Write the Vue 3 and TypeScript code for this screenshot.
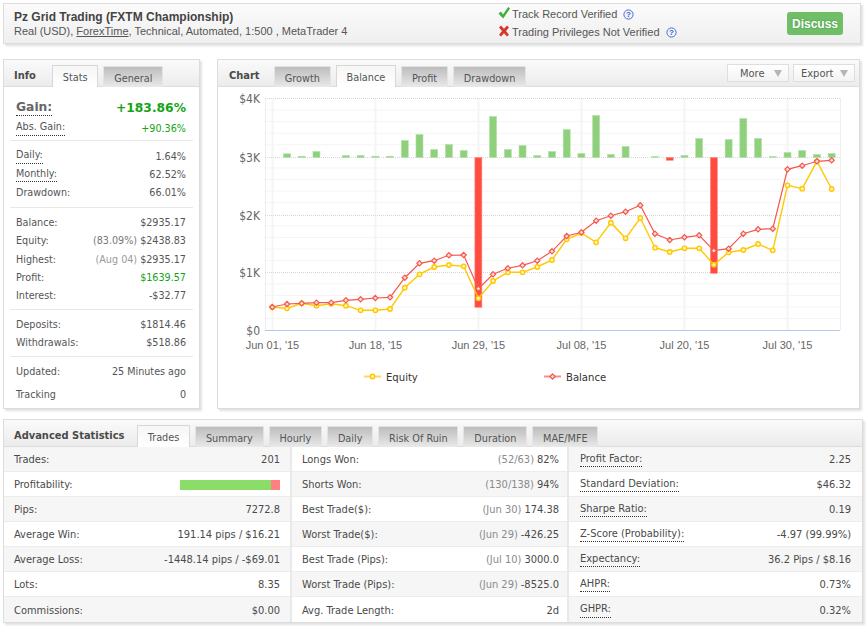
<script setup lang="ts">
import { computed } from 'vue';

interface Row {
  label: string;
  note?: string;
  value?: string;
  dotted?: boolean;
  green?: boolean;
  bar?: boolean;
}

const infoGroups: { cls: string; rows: Row[] }[] = [
  {
    cls: 'g2',
    rows: [
      { label: 'Daily:', value: '1.64%', dotted: true },
      { label: 'Monthly:', value: '62.52%', dotted: true },
      { label: 'Drawdown:', value: '66.01%' },
    ],
  },
  {
    cls: 'g3',
    rows: [
      { label: 'Balance:', value: '$2935.17' },
      { label: 'Equity:', note: '(83.09%)', value: '$2438.83' },
      { label: 'Highest:', note: '(Aug 04)', value: '$2935.17' },
      { label: 'Profit:', value: '$1639.57', green: true },
      { label: 'Interest:', value: '-$32.77' },
    ],
  },
  {
    cls: 'g4',
    rows: [
      { label: 'Deposits:', value: '$1814.46' },
      { label: 'Withdrawals:', value: '$518.86' },
    ],
  },
];

const chartTabs = ['Growth', 'Balance', 'Profit', 'Drawdown'];
const statTabs = ['Trades', 'Summary', 'Hourly', 'Daily', 'Risk Of Ruin', 'Duration', 'MAE/MFE'];

const statCols: { cls: string; rows: Row[] }[] = [
  {
    cls: 'col1',
    rows: [
      { label: 'Trades:', value: '201' },
      { label: 'Profitability:', bar: true },
      { label: 'Pips:', value: '7272.8' },
      { label: 'Average Win:', value: '191.14 pips / $16.21' },
      { label: 'Average Loss:', value: '-1448.14 pips / -$69.01' },
      { label: 'Lots:', value: '8.35' },
      { label: 'Commissions:', value: '$0.00' },
    ],
  },
  {
    cls: 'col2',
    rows: [
      { label: 'Longs Won:', note: '(52/63)', value: '82%' },
      { label: 'Shorts Won:', note: '(130/138)', value: '94%' },
      { label: 'Best Trade($):', note: '(Jun 30)', value: '174.38' },
      { label: 'Worst Trade($):', note: '(Jun 29)', value: '-426.25' },
      { label: 'Best Trade (Pips):', note: '(Jul 10)', value: '3000.0' },
      { label: 'Worst Trade (Pips):', note: '(Jun 29)', value: '-8525.0' },
      { label: 'Avg. Trade Length:', value: '2d' },
    ],
  },
  {
    cls: 'col3',
    rows: [
      { label: 'Profit Factor:', value: '2.25', dotted: true },
      { label: 'Standard Deviation:', value: '$46.32', dotted: true },
      { label: 'Sharpe Ratio:', value: '0.19', dotted: true },
      { label: 'Z-Score (Probability):', value: '-4.97 (99.99%)', dotted: true },
      { label: 'Expectancy:', value: '36.2 Pips / $8.16', dotted: true },
      { label: 'AHPR:', value: '0.73%', dotted: true },
      { label: 'GHPR:', value: '0.32%', dotted: true },
    ],
  },
];

// chart geometry, in page pixels (the svg viewBox starts at the panel body)
const X0 = 272.3;
const STEP = 14.72;
const BASE = 157.5;
const xAt = (i: number) => X0 + i * STEP;

const balanceY = [
  307, 304, 303.3, 302.7, 302.7, 300.3, 299.3, 298, 297.3, 277.7, 263.3, 260.7, 255.3, 255, 288.7, 274.3, 268.3,
  265.3, 260.7, 251.3, 236, 232.3, 220.7, 215.7, 211.7, 205.3, 233.7, 240, 237.3, 235.3, 250.7, 248.7, 233.7, 229.3,
  228.7, 169.3, 165.7, 161.3, 160.3,
];
const equityY = [
  307.3, 308.3, 303.3, 305.7, 303.7, 305.7, 310.3, 310.3, 309, 287.7, 274.3, 267, 265, 266.3, 298.3, 281, 272.3,
  272.3, 267, 260, 239.3, 233, 242.3, 222.7, 238.3, 218, 247.7, 252, 248.3, 248.3, 264.7, 252.3, 250, 244, 250.3,
  185.3, 188.7, 161.3, 189,
];
// positive grows up from the $3K line, negative hangs down from it
const barH = [
  0, 3.7, 1.3, 6, 0, 2, 2, 1.3, 1.3, 17, 23, 8, 13, 7, -149.8, 41, 8, 12, 2, 6, 28, 4, 42, 3, 11, 0, 1, -2.8, 2, 19,
  -115.8, 18, 39, 19, 1, 5, 7, 3, 4,
];

const bars = computed(() =>
  barH
    .map((h, i) => ({ h, i }))
    .filter((b) => b.h !== 0)
    .map((b) => ({
      x: xAt(b.i) - 3.5,
      y: b.h > 0 ? BASE - b.h : BASE,
      h: Math.abs(b.h),
      up: b.h > 0,
    })),
);

const toPoints = (ys: number[]) => ys.map((y, i) => `${xAt(i).toFixed(1)},${y}`).join(' ');
const balancePoints = toPoints(balanceY);
const equityPoints = toPoints(equityY);
const diamond = (x: number, y: number) => `${x},${y - 2.6} ${x + 2.6},${y} ${x},${y + 2.6} ${x - 2.6},${y}`;

const yLabels = [
  { t: '$4K', y: 98.5 },
  { t: '$3K', y: 157.5 },
  { t: '$2K', y: 215 },
  { t: '$1K', y: 272 },
  { t: '$0', y: 330 },
];
const majorY = [98.5, 157.5, 215.5, 272.5];
const minorY = computed(() => {
  const out: number[] = [];
  for (let k = 0; k < 4; k++) for (let j = 1; j < 5; j++) out.push(98.5 + k * 57.9 + j * 11.58);
  return out;
});
const xTicks = [
  { x: 272.5, t: "Jun 01, '15" },
  { x: 375.5, t: "Jun 18, '15" },
  { x: 478.5, t: "Jun 29, '15" },
  { x: 581.5, t: "Jul 08, '15" },
  { x: 684.5, t: "Jul 20, '15" },
  { x: 787.5, t: "Jul 30, '15" },
];
</script>

<template>
  <div class="page">
    <header class="panel top">
      <div class="top-title">
        <h1>Pz Grid Trading (FXTM Championship)</h1>
        <p>Real (USD), <u>ForexTime</u>, Technical, Automated, 1:500 , MetaTrader 4</p>
      </div>
      <div class="verify">
        <div class="verify-row">
          <svg class="mark" width="14" height="14" viewBox="0 0 14 14">
            <path d="M1.5 7.5 L4 5.6 L6 8.4 L11.2 1 L13 2.4 L6.2 12.6 Z" fill="#3fae3a" />
          </svg>
          <span>Track Record Verified</span>
          <svg class="help" width="11" height="11" viewBox="0 0 11 11">
            <circle cx="5.5" cy="5.5" r="4.6" fill="#eef3ff" stroke="#4a6fc9" />
            <text x="5.5" y="8.2" text-anchor="middle">?</text>
          </svg>
        </div>
        <div class="verify-row">
          <svg class="mark" width="14" height="14" viewBox="0 0 14 14">
            <path
              d="M2 3.4 L4 1.6 L7 4.8 L10 1.6 L12 3.4 L9 7 L12 10.8 L10 12.6 L7 9.2 L4 12.6 L2 10.8 L5 7 Z"
              fill="#d23a2e"
            />
          </svg>
          <span>Trading Privileges Not Verified</span>
          <svg class="help" width="11" height="11" viewBox="0 0 11 11">
            <circle cx="5.5" cy="5.5" r="4.6" fill="#eef3ff" stroke="#4a6fc9" />
            <text x="5.5" y="8.2" text-anchor="middle">?</text>
          </svg>
        </div>
      </div>
      <button class="discuss">Discuss</button>
    </header>

    <div class="middle">
      <section class="panel info">
        <div class="tabbar">
          <h2 class="bar-title info-title">Info</h2>
          <span class="tab active">Stats</span>
          <span class="tab">General</span>
        </div>
        <div class="group g1">
          <div class="row gain">
            <span class="lbl dotted">Gain:</span>
            <span class="green">+183.86%</span>
          </div>
          <div class="row abs">
            <span class="lbl dotted">Abs. Gain:</span>
            <span class="green">+90.36%</span>
          </div>
        </div>
        <div v-for="g in infoGroups" :key="g.cls" class="group" :class="g.cls">
          <div v-for="r in g.rows" :key="r.label" class="row">
            <span class="lbl" :class="{ dotted: r.dotted }">{{ r.label }}</span>
            <span :class="{ green: r.green }"
              ><span v-if="r.note" class="note" :class="{ pale: r.note.startsWith('(Aug') }">{{ r.note }}</span
              >{{ r.value }}</span
            >
          </div>
        </div>
        <div class="group g5">
          <div class="row"><span class="lbl">Updated:</span><span>25 Minutes ago</span></div>
          <div class="row tracking"><span class="lbl">Tracking</span><span>0</span></div>
        </div>
      </section>

      <section class="panel chart">
        <div class="tabbar">
          <h2 class="bar-title chart-title">Chart</h2>
          <span v-for="t in chartTabs" :key="t" class="tab" :class="{ active: t === 'Balance' }">{{ t }}</span>
          <div class="tools">
            <button class="tool more">More<i></i></button>
            <button class="tool export">Export<i></i></button>
          </div>
        </div>
        <svg class="plot" width="641" height="321" viewBox="218 87 641 321">
          <line v-for="y in minorY" :key="y" x1="265" x2="840" :y1="y" :y2="y" stroke="#f4f4f4" />
          <line
            v-for="t in xTicks"
            :key="t.x"
            :x1="t.x"
            :x2="t.x"
            y1="98.5"
            y2="330"
            stroke="#f4f4f4"
            stroke-width="2"
          />
          <line
            v-for="y in majorY"
            :key="y"
            x1="265"
            x2="840"
            :y1="y"
            :y2="y"
            stroke="#d6d6d6"
            stroke-dasharray="1 1"
          />
          <line x1="265.5" x2="265.5" y1="98.5" y2="330" stroke="#ddd" stroke-dasharray="1 1" />
          <line x1="840.5" x2="840.5" y1="98.5" y2="330" stroke="#ddd" stroke-dasharray="1 1" />
          <line x1="265" x2="840" y1="330.5" y2="330.5" stroke="#b5c9e4" />

          <rect
            v-for="b in bars"
            :key="b.x"
            :x="b.x"
            :y="b.y"
            width="7"
            :height="b.h"
            :fill="b.up ? '#8ed07c' : '#ff4c40'"
            :stroke="b.up ? '#b5e0a8' : '#ff8a80'"
            stroke-width="0.6"
          />

          <polyline :points="equityPoints" fill="none" stroke="#ffc800" stroke-width="1.4" />
          <circle
            v-for="(y, i) in equityY"
            :key="'e' + i"
            :cx="xAt(i)"
            :cy="y"
            r="2.2"
            fill="#fff4c0"
            stroke="#ffc800"
            stroke-width="1.4"
          />
          <polyline :points="balancePoints" fill="none" stroke="#f4574c" stroke-width="1.2" />
          <polygon
            v-for="(y, i) in balanceY"
            :key="'b' + i"
            :points="diamond(xAt(i), y)"
            fill="#ffd9d5"
            stroke="#f4574c"
            stroke-width="1.2"
          />

          <text v-for="l in yLabels" :key="l.t" class="ylab" x="260" :y="l.y + 4.5" text-anchor="end">{{ l.t }}</text>
          <text v-for="t in xTicks" :key="t.t" class="xlab" :x="t.x" y="349" text-anchor="middle">{{ t.t }}</text>

          <line x1="364" x2="381" y1="376.5" y2="376.5" stroke="#ffd95a" stroke-width="2" />
          <circle cx="372.5" cy="376.5" r="2.2" fill="#fff4c0" stroke="#ffc800" stroke-width="1.4" />
          <text class="legend" x="386" y="380.5">Equity</text>
          <line x1="544" x2="561" y1="376.5" y2="376.5" stroke="#fb8f87" stroke-width="2" />
          <polygon :points="diamond(552.5, 376.5)" fill="#ffd9d5" stroke="#f4574c" stroke-width="1.2" />
          <text class="legend" x="566" y="380.5">Balance</text>
        </svg>
      </section>
    </div>

    <section class="panel stats">
      <div class="tabbar">
        <h2 class="bar-title stats-title">Advanced Statistics</h2>
        <span v-for="t in statTabs" :key="t" class="tab" :class="{ active: t === 'Trades' }">{{ t }}</span>
      </div>
      <div class="stat-grid">
        <div v-for="c in statCols" :key="c.cls" class="stat-col" :class="c.cls">
          <div v-for="r in c.rows" :key="r.label" class="stat-row">
            <span class="lbl" :class="{ dotted: r.dotted }">{{ r.label }}</span>
            <span v-if="r.bar" class="profit-bar"><b></b><i></i></span>
            <span v-else
              ><span v-if="r.note" class="note">{{ r.note }}</span
              >{{ r.value }}</span
            >
          </div>
        </div>
      </div>
    </section>
  </div>
</template>

<style scoped>
.page {
  width: 867px;
  height: 627px;
  padding: 3px 0 0 3px;
  box-sizing: border-box;
  overflow: hidden;
  font-family: 'DejaVu Sans Condensed', 'DejaVu Sans', sans-serif;
  font-size: 11px;
  color: #4a4a4a;
}

.panel {
  box-sizing: border-box;
  background: #fff;
  border: 1px solid #dcdcdc;
  box-shadow: 2px 2px 2px #e2e2e2;
}

.top {
  width: 858px;
  height: 41px;
  display: flex;
  background: linear-gradient(#fbfbfb, #efefef);
  font-family: 'Liberation Sans', Arial, sans-serif;
}

.top-title {
  width: 496px;
  padding: 6px 0 0 10px;
  box-sizing: border-box;
}

.top-title h1 {
  margin: 0;
  font-size: 12px;
  line-height: 14px;
  font-weight: bold;
  color: #444;
}

.top-title p {
  margin: 0;
  font-size: 11px;
  line-height: 14px;
  color: #555;
}

.verify {
  width: 287px;
  padding-top: 1px;
  font-size: 11px;
  color: #555;
}

.verify-row {
  display: flex;
  align-items: center;
  height: 18px;
}

.mark {
  margin: -3px 1px 0 -3px;
}

.help {
  margin-left: 6px;
}

.help text {
  font-size: 8px;
  font-weight: bold;
  fill: #3c62c0;
  font-family: 'Liberation Sans', sans-serif;
}

.discuss {
  width: 56px;
  height: 23px;
  margin-top: 8px;
  padding: 0;
  border: 0;
  border-radius: 3px;
  background: #6fbf69;
  color: #fff;
  font-family: 'Liberation Sans', Arial, sans-serif;
  font-size: 12px;
  font-weight: bold;
  text-shadow: 0 0 2px rgba(60, 120, 60, 0.7);
}

.middle {
  display: flex;
  gap: 17px;
  margin-top: 15px;
  height: 350px;
}

.tabbar {
  display: flex;
  align-items: flex-end;
  gap: 5px;
  height: 27px;
  box-sizing: border-box;
  border-bottom: 1px solid #dcdcdc;
  background: linear-gradient(#fafafa, #ececec);
}

.bar-title {
  margin: 4px 0 0;
  align-self: center;
  font-size: 11px;
  font-weight: bold;
  color: #4a4a4a;
}

.info-title {
  width: 33px;
  padding-left: 10px;
}

.chart-title {
  width: 40px;
  padding-left: 11px;
}

.stats-title {
  width: 118px;
  padding-left: 10px;
  white-space: nowrap;
}

.tab {
  height: 21px;
  line-height: 23px;
  margin-bottom: -1px;
  padding: 0 9.8px;
  box-sizing: border-box;
  background: linear-gradient(#bdbdbd, #e9e9e9);
  color: #555;
  border: 1px solid #e4e4e4;
  border-bottom: 0;
  font-size: 10.8px;
  white-space: nowrap;
}

.tab.active {
  height: 22px;
  background: linear-gradient(#f6f6f6, #fff);
  border-color: #d8d8d8;
}

.tools {
  display: flex;
  gap: 4px;
  margin-left: auto;
  margin-right: 4px;
  align-self: flex-start;
  padding-top: 4px;
}

.tool {
  display: flex;
  align-items: center;
  justify-content: space-between;
  width: 62px;
  height: 18px;
  padding: 0 6px 0 12px;
  box-sizing: border-box;
  border: 1px solid #dedede;
  background: linear-gradient(#fff, #f3f3f3);
  color: #555;
  font: inherit;
}

.tool.export {
  padding-left: 7px;
}

.tool i {
  width: 0;
  height: 0;
  border-left: 4px solid transparent;
  border-right: 4px solid transparent;
  border-top: 7px solid #b5b5b5;
}

.info {
  width: 197px;
  color: #555;
  font-size: 10.7px;
}

.group {
  margin: 0 6px;
  padding: 0 7px 0 6px;
  border-bottom: 1px solid #e8e8e8;
}

.row {
  display: flex;
  justify-content: space-between;
  align-items: center;
  height: 18.4px;
  white-space: nowrap;
}

.g1 {
  padding-top: 11px;
  padding-bottom: 2px;
}

.gain,
.abs {
  height: 20px;
}

.gain {
  font-family: 'DejaVu Sans', sans-serif;
  font-size: 12.3px;
  font-weight: bold;
}

.gain .lbl {
  color: #666;
}

.g2 {
  padding-top: 6px;
  padding-bottom: 5px;
}

.g3 {
  padding-top: 5px;
  padding-bottom: 4px;
}

.g4 {
  padding-top: 5px;
  padding-bottom: 4px;
}

.g5 {
  padding-top: 5px;
  border-bottom: 0;
}

.tracking {
  height: 23px;
  margin-top: 3px;
}

.dotted {
  border-bottom: 1px dotted #333;
  line-height: 14.5px;
}

.green {
  color: #14a514;
}

.note {
  color: #777;
  margin-right: 3px;
}

.note.pale {
  color: #999;
}

.chart {
  width: 643px;
}

.plot {
  display: block;
}

.ylab {
  font-size: 12px;
  fill: #666;
}

.xlab {
  font-family: 'Liberation Sans', Arial, sans-serif;
  font-size: 11px;
  fill: #666;
}

.legend {
  font-size: 11.2px;
  fill: #333;
}

.stats {
  width: 860px;
  margin-top: 10px;
}

.stat-grid {
  display: grid;
  grid-template-columns: 288px 277px 1fr;
}

.stat-col {
  border-right: 2px solid #e9e9e9;
}

.col3 {
  border-right: 0;
}

.stat-row {
  display: flex;
  justify-content: space-between;
  align-items: center;
  height: 25px;
  box-sizing: border-box;
  padding: 1px 10px 0;
  border-bottom: 1px solid #ececec;
  white-space: nowrap;
}

.col2 .stat-row {
  padding-right: 8px;
}

.col3 .stat-row {
  padding: 1px 11px 0;
}

.stat-row:last-child {
  border-bottom: 0;
}

.stat-row .note {
  color: #8a8a8a;
}

.col1 .stat-row:nth-child(odd),
.col3 .stat-row:nth-child(odd),
.col2 .stat-row:nth-child(even) {
  background: #f6f6f6;
}

.profit-bar {
  display: flex;
  width: 100px;
  height: 10px;
}

.profit-bar b {
  width: 91px;
  background: #8bdc68;
}

.profit-bar i {
  width: 9px;
  background: #ff8080;
}
</style>

<style>
html,
body {
  background: #fff;
}
</style>
